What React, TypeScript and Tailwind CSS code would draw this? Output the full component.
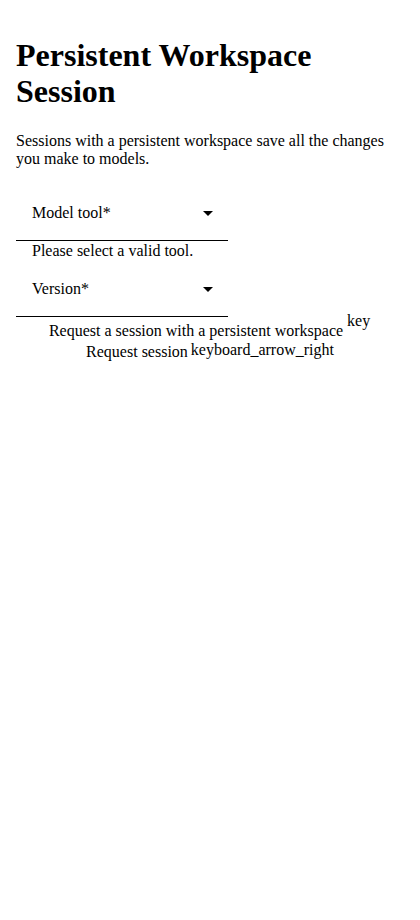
import React from 'react';

const SelectField: React.FC<{ label: string }> = ({ label }) => (
  <div className="flex h-14 w-[212px] items-center justify-between border-b border-black pl-4 pr-[15px]">
    <span>{label}*</span>
    <span className="mt-px h-0 w-0 border-x-[5px] border-t-[5px] border-x-transparent border-t-black" />
  </div>
);

export default function App() {
  return (
    <div className="min-h-[920px] bg-white px-4 pt-4 text-black" style={{ fontFamily: '"Liberation Serif", serif' }}>
      <h1 className="mt-[21px] text-[32px] font-bold leading-[36px]">Persistent Workspace Session</h1>
      <p className="mt-[23px] text-base leading-[18px]">
        Sessions with a persistent workspace save all the changes you make to models.
      </p>
      <div className="mt-[17px] flex flex-col">
        <SelectField label="Model tool" />
        <div className="pl-4 text-base leading-5">Please select a valid tool.</div>
        <SelectField label="Version" />
      </div>
      <div className="flex flex-col gap-[3px] pt-[5px] text-center text-base leading-[18px]">
        <div>
          Request a session with a persistent workspace{' '}
          <span className="relative -top-[10px] inline-block w-6 overflow-hidden text-left align-top">key</span>
        </div>
        <div>
          Request session<span className="relative -top-[2px] ml-[3px]">keyboard_arrow_right</span>
        </div>
      </div>
    </div>
  );
}
